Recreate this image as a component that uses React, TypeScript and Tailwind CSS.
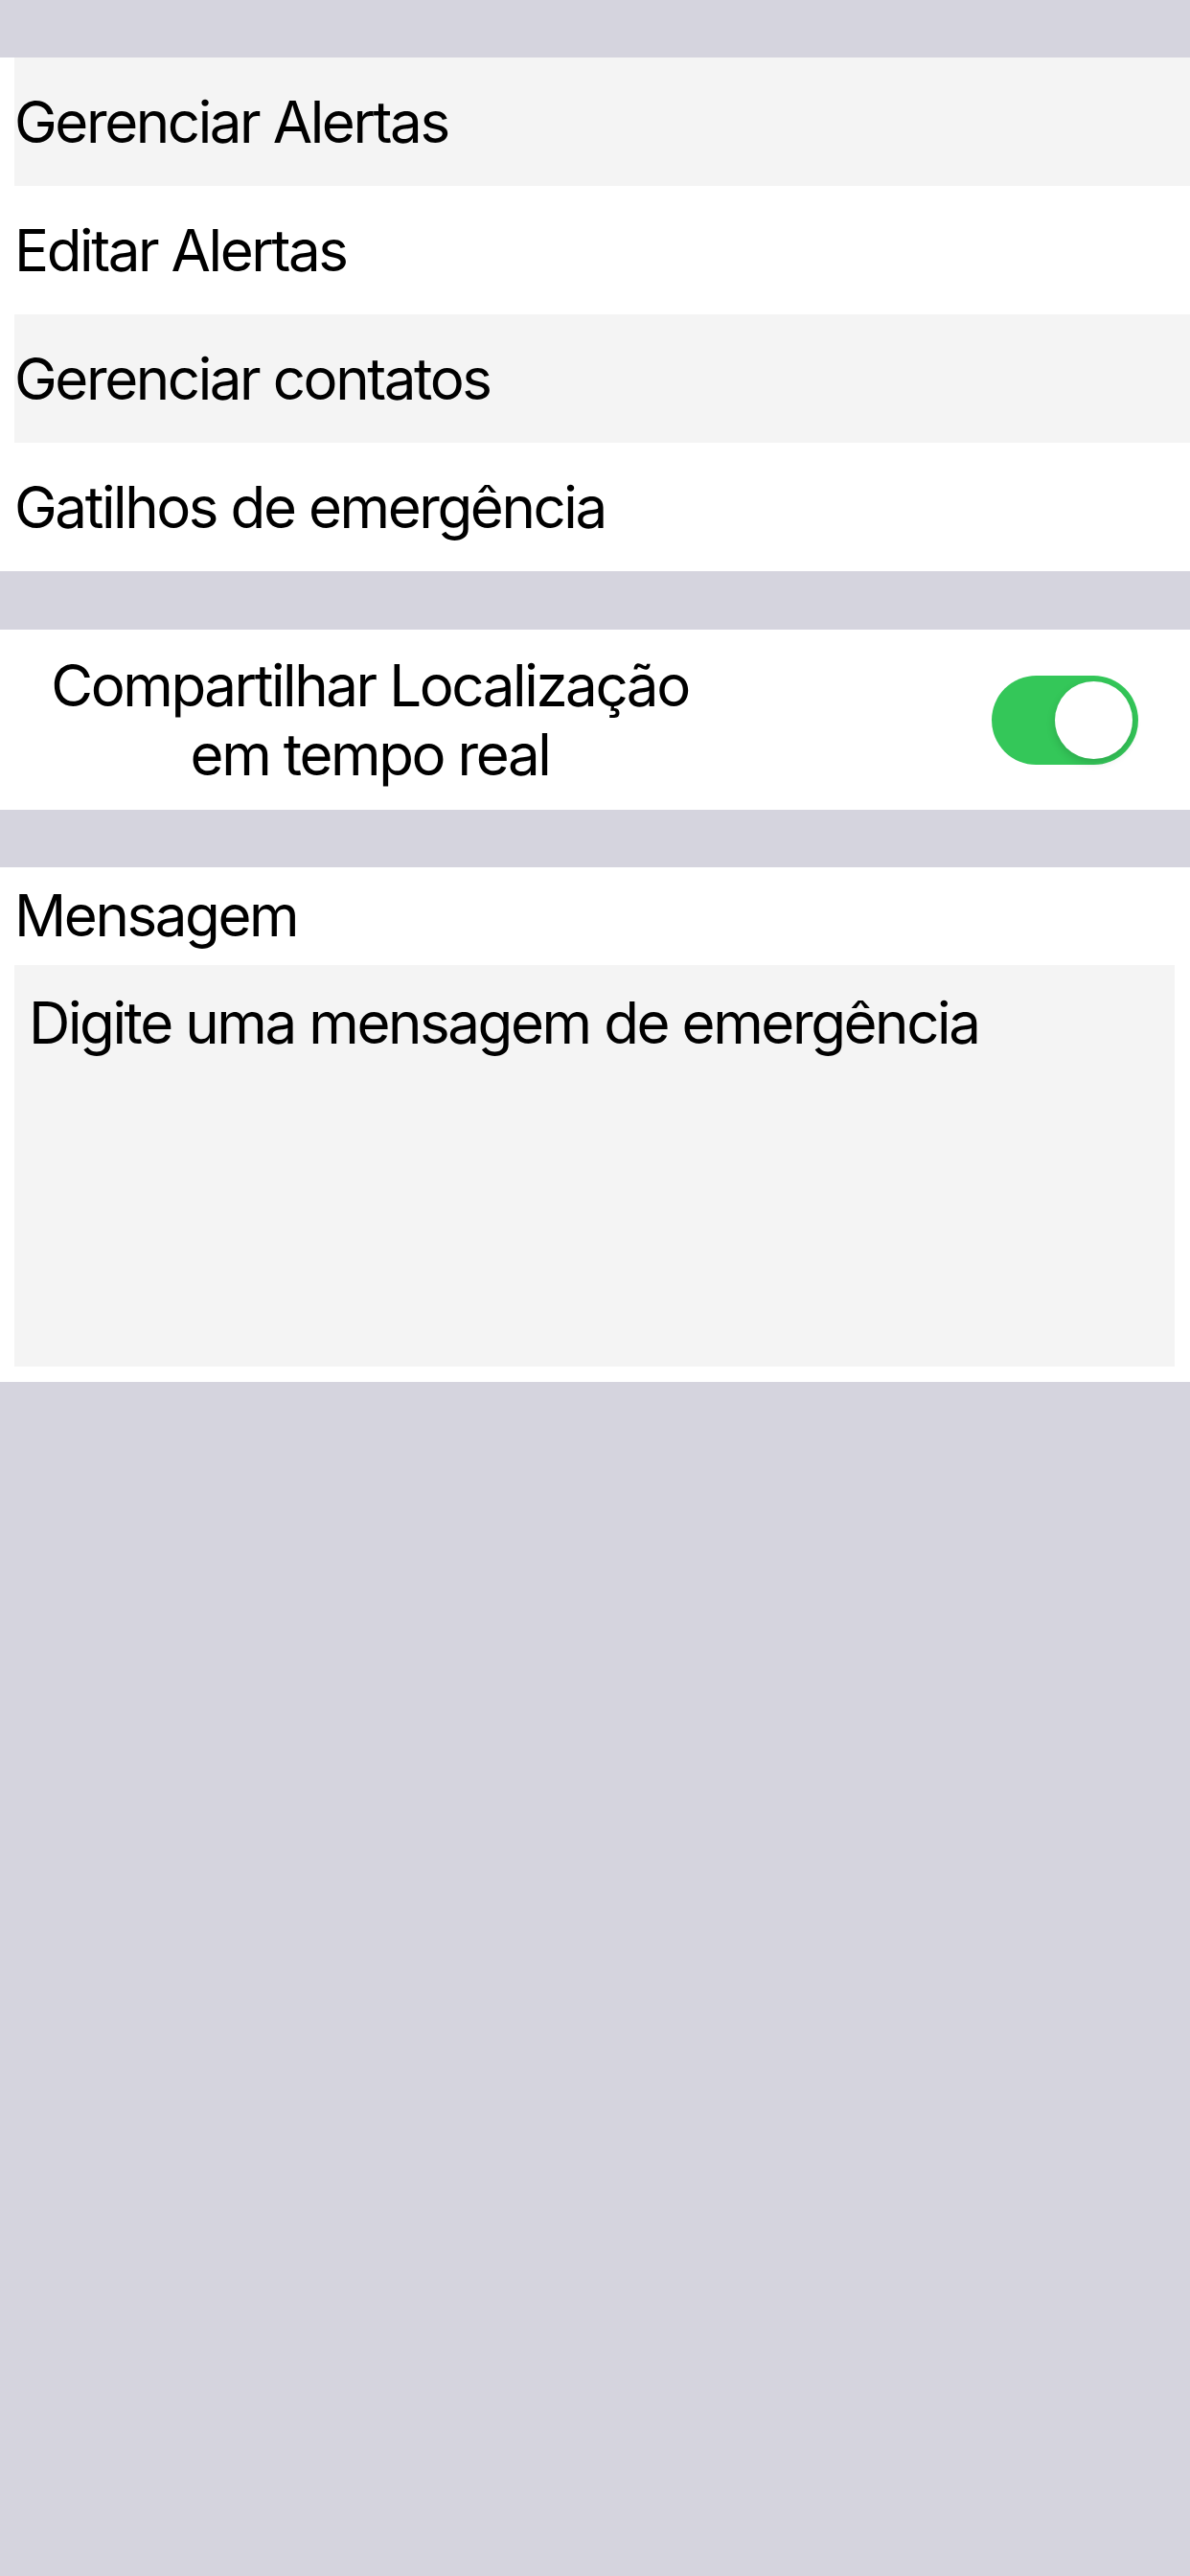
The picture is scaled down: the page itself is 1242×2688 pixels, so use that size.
import React, { useState } from "react";

const font = { fontFamily: "Inter, 'Liberation Sans', sans-serif" };

export default function App() {
  const [on, setOn] = useState(true);
  const rows = [
    { label: "Gerenciar Alertas", shaded: true },
    { label: "Editar Alertas", shaded: false },
    { label: "Gerenciar contatos", shaded: true },
    { label: "Gatilhos de emergência", shaded: false },
  ];
  return (
    <div
      className="min-h-[2688px] w-full bg-[#d5d4de] pt-[60px] text-[60px] leading-[72px] tracking-[-0.04em] text-black"
      style={font}
    >
      <div className="bg-white">
        {rows.map((r) => (
          <div
            key={r.label}
            className={`ml-[15px] flex h-[134px] items-center ${
              r.shaded ? "bg-[#f4f4f4]" : "bg-white"
            }`}
          >
            {r.label}
          </div>
        ))}
      </div>

      <div className="mt-[61px] flex h-[188px] items-center bg-white">
        <div className="w-[772px] text-center">
          Compartilhar Localização
          <br />
          em tempo real
        </div>
        <button
          type="button"
          onClick={() => setOn(!on)}
          className={`ml-auto mr-[54px] flex h-[93px] w-[153px] items-center rounded-full p-[6px] ${
            on ? "justify-end bg-[#34c759]" : "justify-start bg-[#e9e9eb]"
          }`}
        >
          <span className="block h-[81px] w-[81px] rounded-full bg-white shadow-[0_4px_10px_rgba(0,0,0,0.15)]" />
        </button>
      </div>

      <div className="mt-[60px] bg-white px-[15px] pb-[16px] pt-[14px]">
        <div>Mensagem</div>
        <div className="mt-[16px] mr-[1px] h-[419px] bg-[#f4f4f4] px-[15px] pt-[24px]">
          Digite uma mensagem de emergência
        </div>
      </div>
    </div>
  );
}
